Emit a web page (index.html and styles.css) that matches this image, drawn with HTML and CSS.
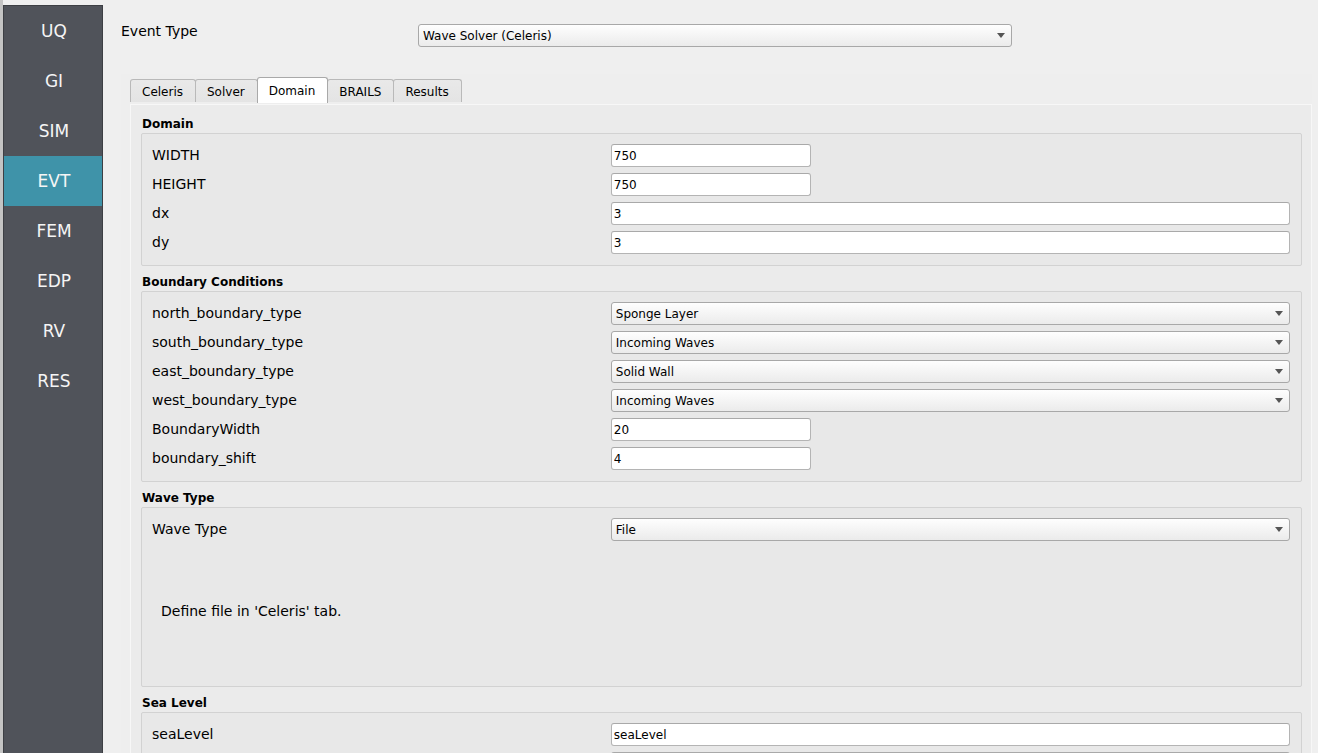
FILE: index.html
```html
<!DOCTYPE html>
<html lang="en">
<head>
<meta charset="UTF-8" />
<meta name="viewport" content="width=device-width, initial-scale=1" />
<title>Event Type - Wave Solver</title>
<link rel="stylesheet" href="styles.css">
</head>
<body>
  <nav class="sidebar">
    <a href="#uq">UQ</a>
    <a href="#gi">GI</a>
    <a href="#sim">SIM</a>
    <a href="#evt" class="active">EVT</a>
    <a href="#fem">FEM</a>
    <a href="#edp">EDP</a>
    <a href="#rv">RV</a>
    <a href="#res">RES</a>
  </nav>

  <main>
    <div class="event-row">
      <label for="event-type">Event Type</label>
      <span class="select">
        <select id="event-type"><option>Wave Solver (Celeris)</option></select>
      </span>
    </div>

    <div class="tab-widget">
      <div class="tabs" role="tablist">
        <button type="button" role="tab">Celeris</button>
        <button type="button" role="tab">Solver</button>
        <button type="button" role="tab" class="active" aria-selected="true">Domain</button>
        <button type="button" role="tab">BRAILS</button>
        <button type="button" role="tab">Results</button>
      </div>

      <form class="panel">
        <h2>Domain</h2>
        <div class="group">
          <div class="row">
            <label for="width">WIDTH</label>
            <input type="text" id="width" class="short" value="750" />
          </div>
          <div class="row">
            <label for="height">HEIGHT</label>
            <input type="text" id="height" class="short" value="750" />
          </div>
          <div class="row">
            <label for="dx">dx</label>
            <input type="text" id="dx" value="3" />
          </div>
          <div class="row">
            <label for="dy">dy</label>
            <input type="text" id="dy" value="3" />
          </div>
        </div>

        <h2>Boundary Conditions</h2>
        <div class="group">
          <div class="row">
            <label for="north">north_boundary_type</label>
            <span class="select">
              <select id="north"><option>Sponge Layer</option><option>Incoming Waves</option><option>Solid Wall</option></select>
            </span>
          </div>
          <div class="row">
            <label for="south">south_boundary_type</label>
            <span class="select">
              <select id="south"><option>Sponge Layer</option><option selected>Incoming Waves</option><option>Solid Wall</option></select>
            </span>
          </div>
          <div class="row">
            <label for="east">east_boundary_type</label>
            <span class="select">
              <select id="east"><option>Sponge Layer</option><option>Incoming Waves</option><option selected>Solid Wall</option></select>
            </span>
          </div>
          <div class="row">
            <label for="west">west_boundary_type</label>
            <span class="select">
              <select id="west"><option>Sponge Layer</option><option selected>Incoming Waves</option><option>Solid Wall</option></select>
            </span>
          </div>
          <div class="row">
            <label for="boundary-width">BoundaryWidth</label>
            <input type="text" id="boundary-width" class="short" value="20" />
          </div>
          <div class="row">
            <label for="boundary-shift">boundary_shift</label>
            <input type="text" id="boundary-shift" class="short" value="4" />
          </div>
        </div>

        <h2>Wave Type</h2>
        <div class="group">
          <div class="row">
            <label for="wave-type">Wave Type</label>
            <span class="select">
              <select id="wave-type"><option>File</option></select>
            </span>
          </div>
          <p class="note">Define file in 'Celeris' tab.</p>
        </div>

        <h2>Sea Level</h2>
        <div class="group">
          <div class="row">
            <label for="sea-level">seaLevel</label>
            <input type="text" id="sea-level" value="seaLevel" />
          </div>
          <div class="row">
            <span></span>
            <input type="text" aria-label="Sea level value" />
          </div>
        </div>
      </form>
    </div>
  </main>
</body>
</html>
```

FILE: styles.css
```css
* {
  box-sizing: border-box;
}

body {
  margin: 0;
  height: 100vh;
  overflow: hidden;
  display: flex;
  background: #efefef;
  border-left: 3px solid #c4c4c4;
  color: #000;
  font-family: 'DejaVu Sans', Verdana, sans-serif;
  font-size: 14px;
}

/* Sidebar */
.sidebar {
  flex: 0 0 100px;
  margin-top: 5px;
  background: #50535a;
  border: 1px solid #3d3f44;
  border-bottom: none;
}

.sidebar a {
  display: block;
  height: 50px;
  padding-left: 2px;
  line-height: 50px;
  color: #f5f5f5;
  font-size: 17px;
  text-align: center;
  text-decoration: none;
}

.sidebar a.active {
  background: #3f93a9;
}

/* Main area */
main {
  flex: 1;
  min-width: 0;
  overflow: hidden;
  padding: 24px 6px 0 18px;
}

.event-row {
  display: grid;
  grid-template-columns: 1fr 2fr 1fr;
  height: 50px;
  padding-right: 3px;
}

label {
  line-height: 14px;
}

input,
select {
  display: block;
  width: 100%;
  height: 23px;
  margin: 0;
  border: 1px solid #b4b4b4;
  border-radius: 3px;
  color: #000;
  font-family: inherit;
  font-size: 12px;
}

input {
  padding: 0 2px;
  border-top-color: #a9a9a9;
  background: #fff;
}

.short {
  width: 200px;
}

select {
  appearance: none;
  padding: 0 20px 0 4px;
  border-color: #a8a8a8;
  background: linear-gradient(#fefefe, #ebebeb);
}

.select {
  display: block;
  height: 23px;
  position: relative;
}

.select::after {
  content: '';
  position: absolute;
  top: 9px;
  right: 7px;
  border: 4px solid transparent;
  border-top: 5px solid #555;
  border-bottom: none;
  pointer-events: none;
}

/* Tabs */
.tab-widget {
  padding: 3px 0 0 9px;
  background: #eee;
}

.tabs {
  display: flex;
  height: 27px;
  align-items: flex-start;
}

.tabs button {
  height: 23px;
  margin: 2px -1px 0 0;
  padding: 2px 12px 0 11px;
  background: linear-gradient(#e9e9e9, #e4e4e4);
  border: 1px solid #b9b9b9;
  border-bottom: none;
  border-radius: 3px 3px 0 0;
  color: #000;
  font-family: inherit;
  font-size: 12px;
}

.tabs button.active {
  z-index: 1;
  height: 26px;
  margin-top: 0;
  padding-top: 0;
  background: #fff;
  border-color: #a9a9a9;
}

/* Panel and group boxes */
.panel {
  padding: 11px 9px 20px 10px;
  background: #ebebeb;
  border: 1px solid #f7f7f7;
}

h2 {
  margin: 0;
  padding: 0 1px 1px;
  font-size: 12px;
  font-weight: bold;
  line-height: 16px;
}

.group {
  display: grid;
  gap: 6px;
  margin-bottom: 8px;
  padding: 10px 11px 11px 10px;
  background: #e8e8e8;
  border: 1px solid #d2d2d2;
  border-radius: 2px;
}

.row {
  display: grid;
  grid-template-columns: 2fr 3fr;
  column-gap: 6px;
}

.row label {
  line-height: 22px;
}

.note {
  display: flex;
  align-items: center;
  height: 128px;
  margin: 0;
  padding: 0 9px;
}
```
